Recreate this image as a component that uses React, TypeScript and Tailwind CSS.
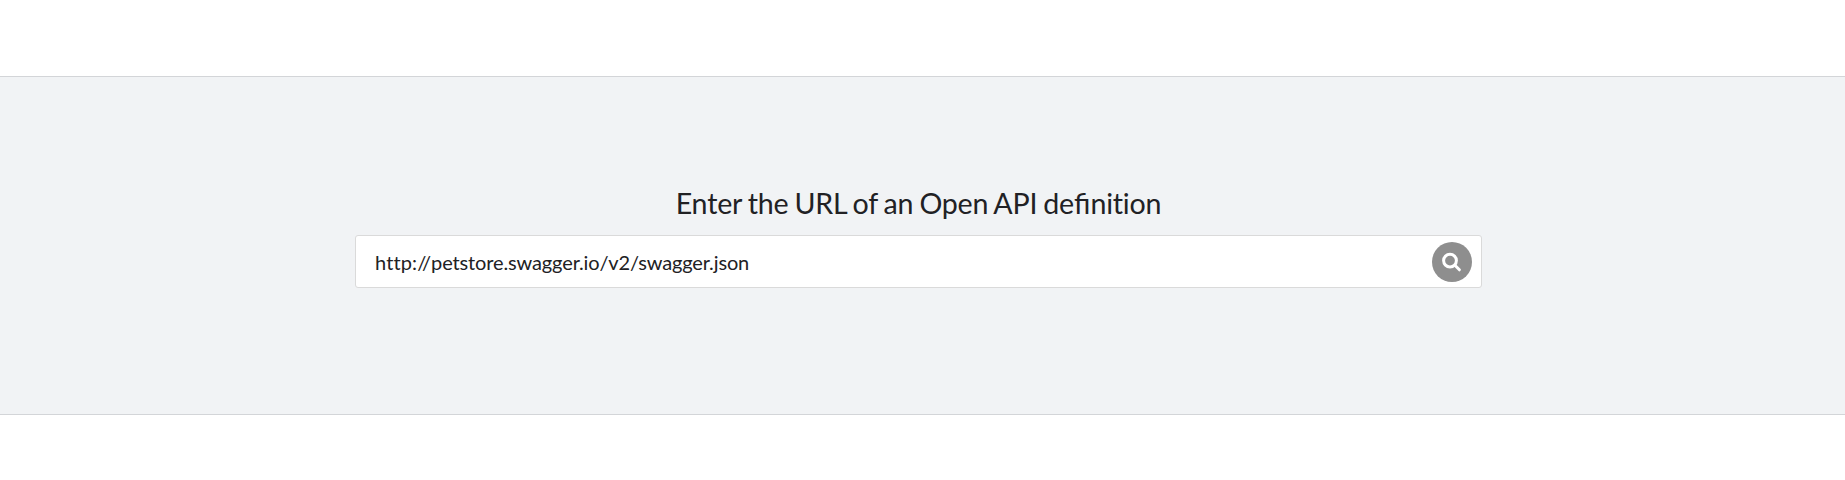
export default function App() {
  return (
    <div className="h-[480px] bg-white pt-[76px] font-[Lato,sans-serif] text-[#212124]">
      <section className="flex h-[339px] flex-col items-center border-y border-[#d3d5d8] bg-[#f1f3f5] pr-[8px] pt-[106px]">
        <h1 className="text-[28.6px] leading-[40px] tracking-[-0.2px] [word-spacing:-1.1px]">Enter the URL of an Open API de<span className="tracking-normal">fi</span>nition</h1>
        <div className="mt-[12px] flex h-[53px] w-[1127px] items-center justify-between rounded-[3px] border border-[#dadada] bg-white pl-[19px] pr-[9px]">
          <span className="text-[20px] tracking-[-0.13px]"><span className="tracking-[0.13px]">http://</span>petstore.swagger.io/v2/swagger.json</span>
          <button aria-label="Search" className="flex size-[40px] items-center justify-center rounded-full bg-[#8e8e8e]">
            <svg width="20" height="20" viewBox="0 0 20 20" fill="none" stroke="white" strokeWidth="3" strokeLinecap="round"><circle cx="8" cy="8.6" r="6.4" /><path d="m12.9 13.3 4.5 4.5" /></svg>
          </button>
        </div>
      </section>
    </div>
  );
}
